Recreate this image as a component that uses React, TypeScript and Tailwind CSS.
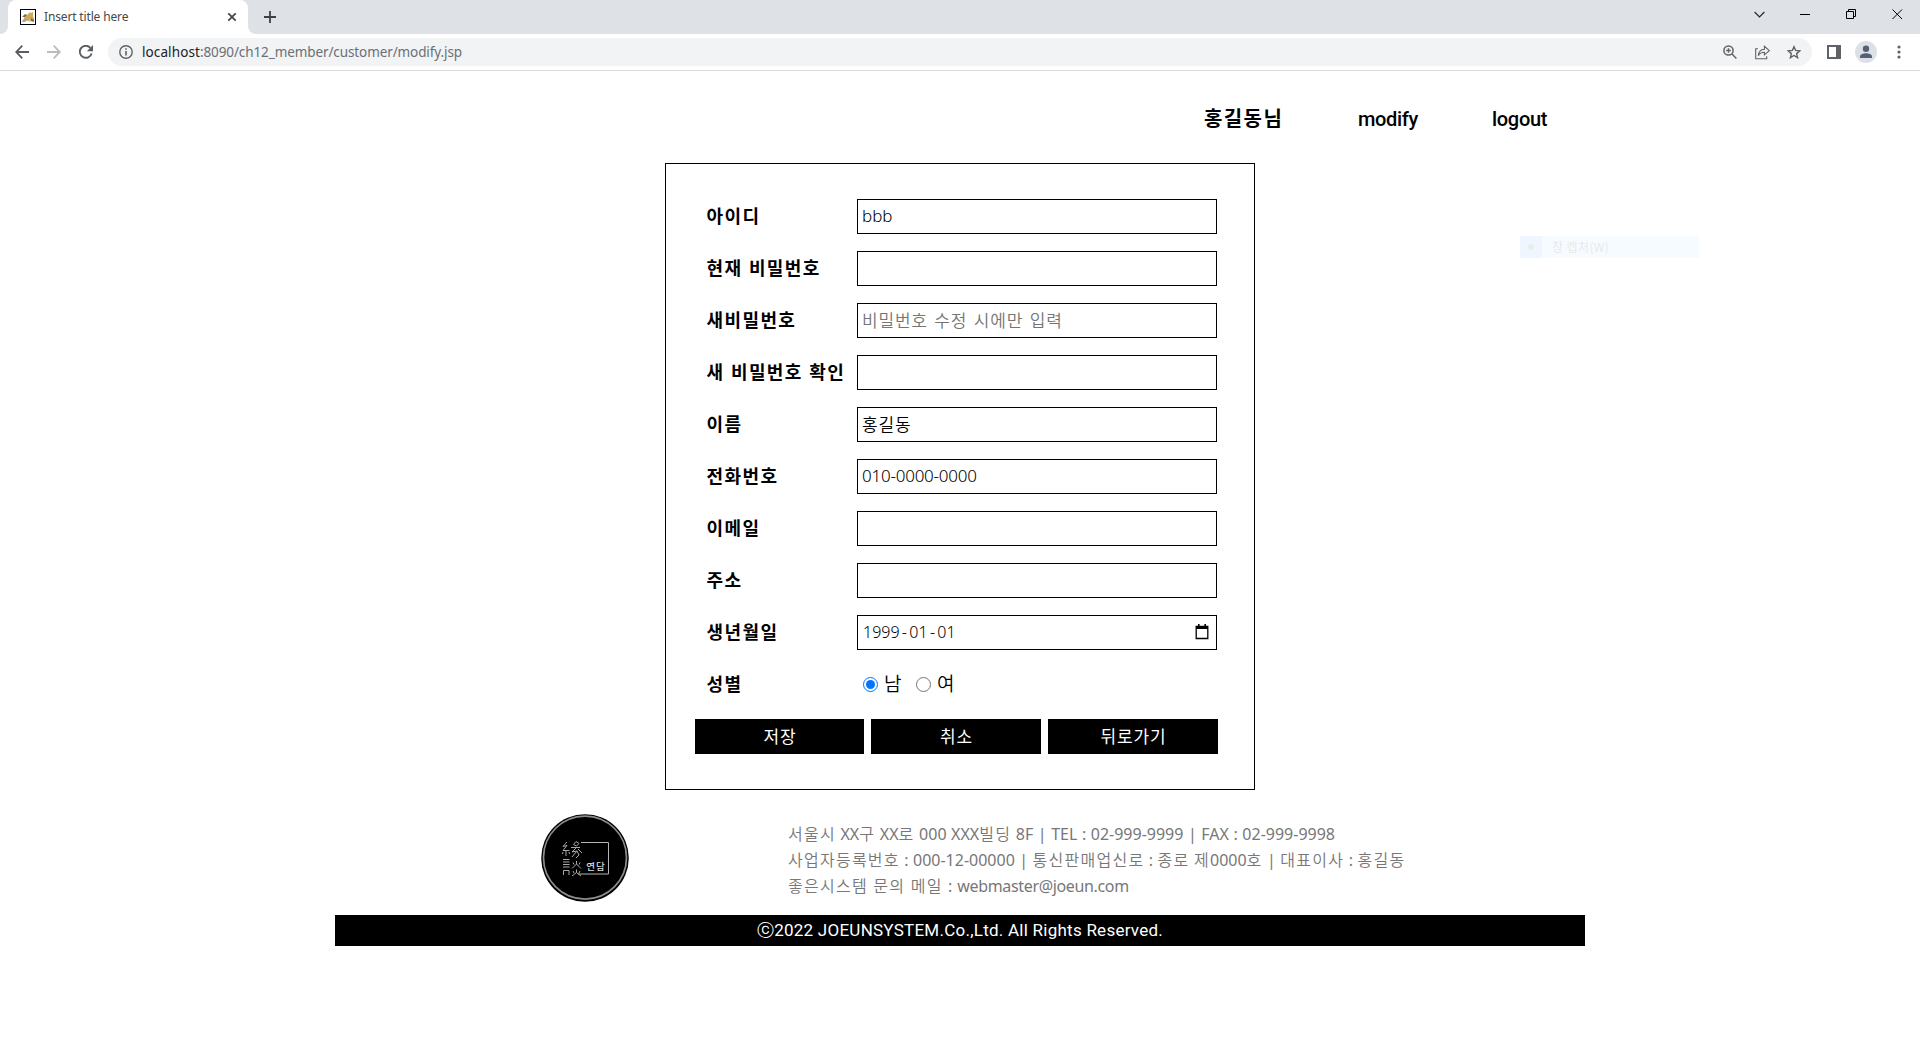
import type { ReactNode } from "react";

const HANGUL = /([\u3131-\uD79D]+)/;

function Mixed({ text, hangul, latin }: { text: string; hangul: string; latin: string }) {
  return (
    <>
      {text.split(HANGUL).map((part, i) => (
        <span key={i} className={HANGUL.test(part) ? hangul : latin}>{part}</span>
      ))}
    </>
  );
}

function TabStrip() {
  return (
    <div className="flex h-[34px] items-stretch bg-[#dee1e6] font-['Noto_Sans','Noto_Sans_CJK_KR',sans-serif]">
      <div className="flex w-2 items-end bg-white"><div className="h-full w-full rounded-br-lg bg-[#dee1e6]" /></div>
      <div className="flex w-60 items-center rounded-t-lg bg-white pl-3 pr-[11px]">
        <svg className="size-4 shrink-0" viewBox="0 0 16 16">
          <rect x=".5" y=".5" width="15" height="15" fill="#fff" stroke="#000" />
          <path d="M3 11l2-4 3-2 2-2 1 1 2-1v4l1 3v2l-3-1-3 1-3-1z" fill="#cfa95c" />
          <path d="M2 8l3-3 2 1-2 2zM11 9l3 2v2l-3-1z" fill="#7c6a54" />
          <path d="M2 12l3-2 2 1-2 2H2zM9 12l2-1v2z" fill="#a3a3a3" />
        </svg>
        <span className="ml-2 text-[12px] tracking-[-0.15px] text-[#45474a]">Insert title here</span>
        <svg className="ml-auto size-[10px]" viewBox="0 0 10 10"><path d="M1.3 1.3l7.4 7.4M8.7 1.3L1.3 8.7" stroke="#45494d" strokeWidth="1.8" /></svg>
      </div>
      <div className="w-2 bg-white"><div className="h-full w-full rounded-bl-lg bg-[#dee1e6]" /></div>
      <svg className="ml-2 mt-[11px] size-3" viewBox="0 0 12 12"><path d="M6 0v12M0 6h12" stroke="#3c4043" strokeWidth="1.8" /></svg>
      <div className="ml-auto mr-[17px] flex h-7 items-center gap-[35px]">
        <svg className="size-[11px]" viewBox="0 0 11 11"><path d="M.6 3l4.9 5 4.9-5" fill="none" stroke="#222" strokeWidth="1.1" /></svg>
        <svg className="size-[11px]" viewBox="0 0 11 11"><path d="M0 5.5h10" stroke="#000" /></svg>
        <svg className="size-[11px]" viewBox="0 0 11 11"><path d="M.5 2.5h7v7h-7zM2.5 2.5V.5h7v7H7.5" fill="none" stroke="#000" /></svg>
        <svg className="size-[11px]" viewBox="0 0 11 11"><path d="M.5.5l9.5 9.5M10 .5L.5 10" stroke="#000" /></svg>
      </div>
    </div>
  );
}

function Toolbar() {
  return (
    <div className="flex h-[37px] items-center border-b border-[#d9dadc] bg-white font-['Noto_Sans','Noto_Sans_CJK_KR',sans-serif]">
      <svg className="ml-[15px] size-[14px]" viewBox="0 0 14 14"><path d="M7.3.7L1.2 7l6.1 6.3M1 7h13" fill="none" stroke="#5a5e63" strokeWidth="1.8" /></svg>
      <svg className="ml-[18px] size-[14px]" viewBox="0 0 14 14"><path d="M6.7.7L12.8 7l-6.1 6.3M13 7H0" fill="none" stroke="#babcbe" strokeWidth="1.8" /></svg>
      <svg className="ml-[18px] size-[14px]" viewBox="0 0 14 14"><path d="M12.6 8.4A6 6 0 1 1 11.3 2.8" fill="none" stroke="#5a5e63" strokeWidth="1.9" /><path d="M14 0v6.2H7.8z" fill="#5a5e63" /></svg>
      <div className="ml-[15px] flex h-7 w-[1704px] items-center rounded-full bg-[#f1f3f4] px-[11px]">
        <svg className="size-[14px]" viewBox="0 0 14 14"><circle cx="7" cy="7" r="6.2" fill="none" stroke="#5f6368" strokeWidth="1.4" /><path d="M7 6v4.5M7 3.2v1.6" stroke="#5f6368" strokeWidth="1.6" /></svg>
        <span className="ml-[9px] text-[13.5px] tracking-[-0.1px] text-[#6b6f74]"><span className="tracking-[0.1px] text-[#202124]">localhost</span>:8090/ch12_member/customer/modify.jsp</span>
        <div className="ml-auto flex items-center gap-[17px]">
          <svg className="mr-px size-[14px]" viewBox="0 0 14 14"><circle cx="5.5" cy="5.5" r="4.6" fill="none" stroke="#5f6368" strokeWidth="1.5" /><path d="M9 9l4.4 4.4M5.5 3.2v4.6M3.2 5.5h4.6" stroke="#5f6368" strokeWidth="1.4" /></svg>
          <svg className="size-[15px]" viewBox="0 0 15 15"><path d="M3 3.8H.7v10h11v-2.6" fill="none" stroke="#5f6368" strokeWidth="1.1" /><path d="M3.3 10.6C3.6 6.6 6 4.4 9.4 4.2V1.3l4.9 4.4-4.9 4.2V7.2c-2.8 0-4.7 1-6.1 3.4z" fill="none" stroke="#5f6368" strokeWidth="1.1" /></svg>
          <svg className="size-[14px]" viewBox="0 0 14 14"><path d="M7 1.7l1.6 3.7 4.2.4-3.2 2.8 1 4.1L7 10.5l-3.6 2.2 1-4.1L1.2 5.8l4.2-.4z" fill="none" stroke="#5f6368" strokeWidth="1.4" /></svg>
        </div>
      </div>
      <svg className="ml-[15px] size-[14px]" viewBox="0 0 14 14"><path d="M1 1h12v12H1z" fill="none" stroke="#5f6368" strokeWidth="2" /><path d="M9 1h4v12H9z" fill="#5f6368" /></svg>
      <svg className="ml-[14px] size-[22px]" viewBox="0 0 22 22"><circle cx="11" cy="11" r="11" fill="#dde1e7" /><circle cx="11" cy="7.8" r="3.2" fill="#556076" /><path d="M5 17v-1.6c0-2 3.5-3.2 6-3.2s6 1.2 6 3.2V17z" fill="#556076" /></svg>
      <svg className="ml-[19.5px] h-[14px] w-1" viewBox="0 0 4 14"><circle cx="2" cy="2" r="1.6" fill="#5f6368" /><circle cx="2" cy="7" r="1.6" fill="#5f6368" /><circle cx="2" cy="12" r="1.6" fill="#5f6368" /></svg>
    </div>
  );
}

function Row({ name, children }: { name: string; children?: ReactNode }) {
  return (
    <div className="flex h-[35px] items-center">
      <div className="w-[151px] shrink-0 whitespace-nowrap pb-[2px] pl-[0.5px] text-[18px] font-bold tracking-[1.4px] [word-spacing:1px]">{name}</div>
      {children}
    </div>
  );
}

function Box({ children }: { children?: ReactNode }) {
  return <div className="flex h-[35px] w-[360px] items-center border border-black pb-px pl-1 pr-[7px] text-[17px] font-[350]">{children}</div>;
}

function Logo() {
  return (
    <svg className="size-[88px]" viewBox="0 0 88 88">
      <circle cx="44" cy="44" r="43.8" fill="#000" />
      <circle cx="44" cy="43.6" r="41.5" fill="none" stroke="#8c8c8c" strokeWidth="1.7" />
      <path d="M40 28.5h27.5v31.5H37" fill="none" stroke="#b5b5b5" strokeWidth="1" />
      <g fill="none" stroke="#a8a8a8" strokeWidth="1">
        <path d="M26 28l-4 4.500 4-1-4 5M22 36.500h6.500M25 36v6M22 38l-.5 2M28 38l.5 2" />
        <path d="M35 27.500l3 2-2.500 2.500-3-1.500zM30 33.500h9M36 33l-5 5 5-1-5 6M37 35l4 4M36 37l2 4-3 3" />
        <path d="M22 45.500h6.500M22 48h6.500M22 50.500h6.500M22 53h6.500M22.500 61v-4.500h5.500V61" />
        <path d="M35.500 47v3l-4.500 4.500M35.500 50l4.500 4.500M32 48.500l1 2M39 48.500l-1 2M35.500 55.500v3L31 62M35.500 58.500L40 62M32 57l1 2M39 57l-1 2" />
      </g>
      <text x="45.300" y="55.600" fontSize="9.500" fontWeight="500" fill="#ddd" fontFamily="Noto Sans CJK KR, sans-serif" letterSpacing="1">연담</text>
    </svg>
  );
}

const FOOTER = [
  { text: "서울시 XX구 XX로 000 XXX빌딩 8F | TEL : 02-999-9999 | FAX : 02-999-9998", latin: "font-['Noto_Sans'] [word-spacing:0.4px]" },
  { text: "사업자등록번호 : 000-12-00000 | 통신판매업신로 : 종로 제0000호 | 대표이사 : 홍길동", latin: "font-['Noto_Sans'] [word-spacing:0.3px]" },
  { text: "좋은시스템 문의 메일 : webmaster@joeun.com", latin: "font-['Noto_Sans'] tracking-[-0.35px] [word-spacing:1.6px]" },
];

export default function App() {
  return (
    <div className="relative h-[1040px] w-[1920px] overflow-hidden bg-white text-black">
      <TabStrip />
      <Toolbar />
      <div className="font-['Noto_Sans_CJK_KR',sans-serif]">
        <nav className="ml-[1204px] mt-[32px] flex h-8 items-center whitespace-nowrap text-[20px] leading-8">
          <span className="w-[154px] pb-[2px] font-bold tracking-[1.4px]">홍길동님</span>
          <span className="w-[134px] font-['Roboto',sans-serif] font-medium tracking-[-0.35px]">modify</span>
          <span className="font-['Roboto',sans-serif] font-medium tracking-[-0.3px]">logout</span>
        </nav>

        <form className="ml-[665px] mt-7 h-[627px] w-[590px] border border-black pl-10 pt-[35px]">
          <div className="flex flex-col gap-[17px]">
            <Row name="아이디"><Box><span className="font-['Noto_Sans']">bbb</span></Box></Row>
            <Row name="현재 비밀번호"><Box /></Row>
            <Row name="새비밀번호"><Box><span className="tracking-[0.8px] text-[#757575] [word-spacing:2px]">비밀번호 수정 시에만 입력</span></Box></Row>
            <Row name="새 비밀번호 확인"><Box /></Row>
            <Row name="이름"><Box><span className="tracking-[0.8px]">홍길동</span></Box></Row>
            <Row name="전화번호"><Box><span className="font-['Noto_Sans'] tracking-[-0.23px]">010-0000-0000</span></Box></Row>
            <Row name="이메일"><Box /></Row>
            <Row name="주소"><Box /></Row>
            <Row name="생년월일">
              <Box>
                <span className="ml-px font-['Noto_Sans'] text-[16px]">1999<span className="mx-[2.3px]">-</span>01<span className="mx-[2.3px]">-</span>01</span>
                <svg className="ml-auto h-4 w-[14px]" viewBox="0 0 14 16"><path d="M1.200 2.500h11.600v12H1.200z" fill="none" stroke="#000" strokeWidth="1.300" /><path d="M1 2h12v3H1zM3 0h1.600v3H3zM9.400 0H11v3H9.400z" /></svg>
              </Box>
            </Row>
            <Row name="성별">
              <div className="flex items-center pl-[6px] text-[19px] font-[350]">
                <input type="radio" name="gender" defaultChecked className="m-0 size-[15px]" />
                <span className="ml-[6px] w-[32px] pb-[2px]">남</span>
                <input type="radio" name="gender" className="m-0 size-[15px]" />
                <span className="ml-[6px] pb-[2px]">여</span>
              </div>
            </Row>
          </div>
          <div className="-ml-[11px] mt-[17px] grid w-[523px] grid-cols-[169px_170px_170px] gap-[7px]">
            {["저장", "취소", "뒤로가기"].map((t) => (
              <button key={t} type="button" className="h-[35px] bg-black pb-[2px] pl-px text-[17px] tracking-[0.8px] text-white">{t}</button>
            ))}
          </div>
        </form>

        <footer className="ml-[335px] mt-6 w-[1250px]">
          <div className="flex h-[101px]">
            <div className="ml-[206px]"><Logo /></div>
            <div className="ml-[159px] mt-[6px] whitespace-nowrap text-[16px] leading-[26px] text-[#777]">
              {FOOTER.map((line) => (
                <div key={line.text} className="h-[26px]">
                  <Mixed text={line.text} hangul="tracking-[1.25px] font-[350]" latin={line.latin} />
                </div>
              ))}
            </div>
          </div>
          <div className="flex h-[31px] items-center justify-center bg-black pt-px font-['Roboto',sans-serif] text-[17px] tracking-[0.25px] text-white">ⓒ2022 JOEUNSYSTEM.Co.,Ltd. All Rights Reserved.</div>
        </footer>
      </div>
      <div className="absolute left-[1520px] top-[236px] flex h-[22px] w-[179px] items-center bg-[#f6fbff] font-['Noto_Sans_CJK_KR',sans-serif] text-[12px] text-[#e9e9e9]">
        <div className="flex h-full w-[22px] items-center justify-center bg-[#eff6ff]"><div className="size-[6px] rounded-full bg-[#ececec]" /></div>
        <span className="ml-[10px] pb-px tracking-[0.4px]">창 캡처(W)</span>
      </div>
    </div>
  );
}
